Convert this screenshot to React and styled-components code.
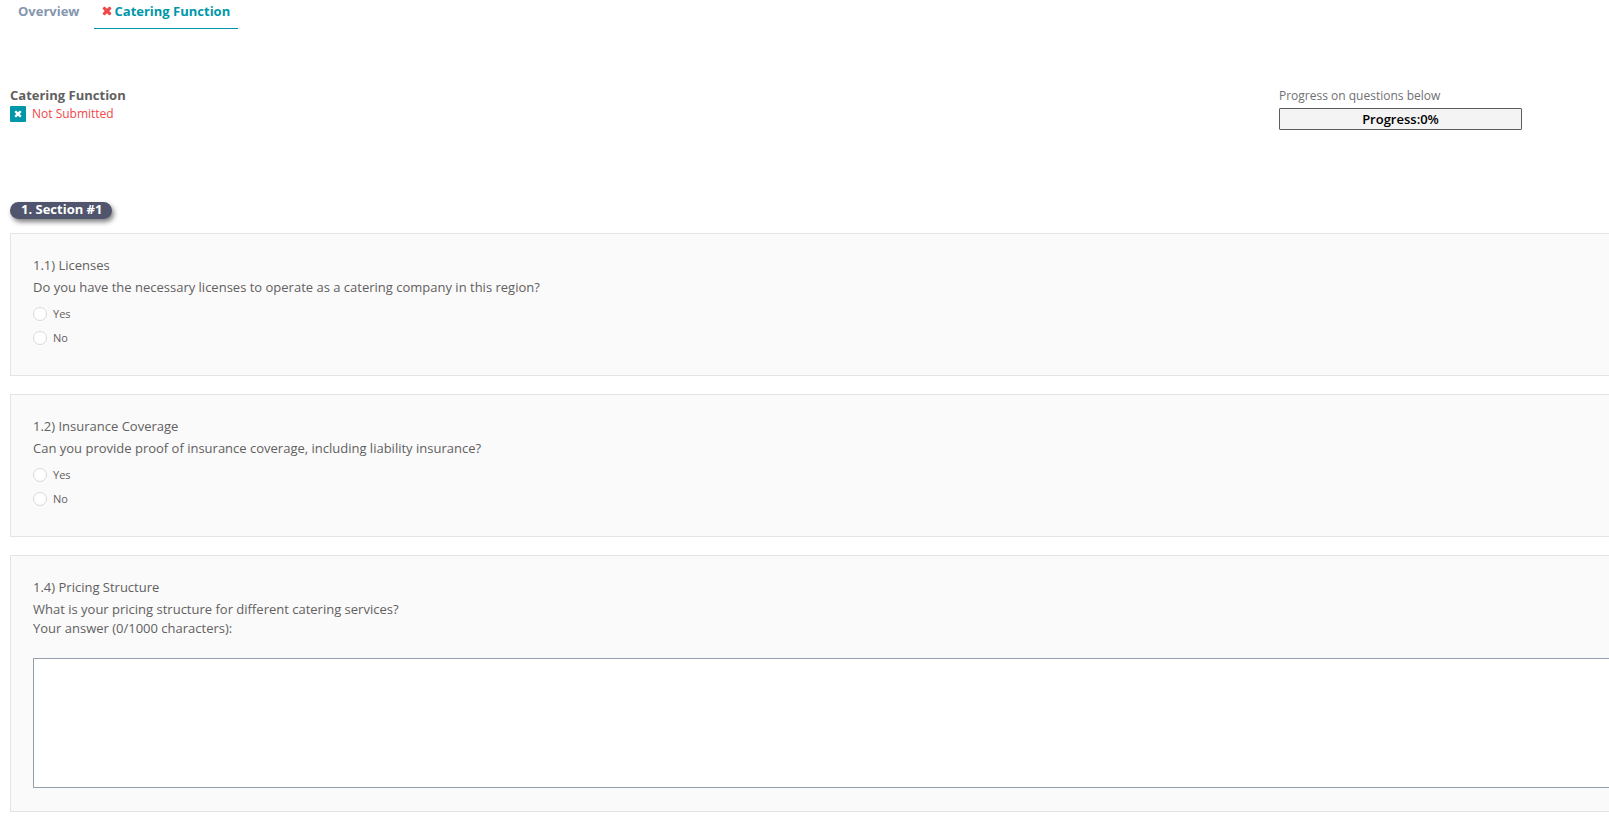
import React, { useState } from "react";
import styled, { createGlobalStyle } from "styled-components";

const GlobalStyle = createGlobalStyle`
  *, *::before, *::after { box-sizing: border-box; }
  body {
    margin: 0;
    background: #fff;
    color: #626060;
    font-family: "Open Sans", "Noto Sans", sans-serif;
    font-size: 13px;
    line-height: 20px;
    overflow-x: hidden;
  }
`;

const Page = styled.main`
  padding: 0 0 5px 10px;
`;

const Tabs = styled.nav`
  display: flex;
  gap: 6px;
`;

const Tab = styled.a`
  display: flex;
  align-items: center;
  gap: 3px;
  height: 29px;
  padding: 0 8px 6px;
  border-bottom: 1px solid ${(p) => (p.$active ? "#0097a9" : "transparent")};
  color: ${(p) => (p.$active ? "#0097a9" : "#8496ae")};
  font-weight: 700;
  text-decoration: none;
`;

const Header = styled.header`
  display: flex;
  justify-content: space-between;
  align-items: flex-start;
  margin-top: 57px;
  padding-right: 87px;
`;

const FunctionName = styled.h1`
  margin: 0 0 2px;
  font-size: 13px;
  line-height: 18px;
  font-weight: 700;
`;

const Status = styled.p`
  display: flex;
  align-items: center;
  gap: 6px;
  margin: 0;
  height: 16px;
  color: #f0474b;
  font-size: 12px;
`;

const StatusBadge = styled.span`
  display: flex;
  align-items: center;
  justify-content: center;
  width: 16px;
  height: 16px;
  border-radius: 1px;
  background: #0097a9;
  color: #fff;
`;

const ProgressPanel = styled.div`
  width: 243px;
`;

const ProgressLabel = styled.div`
  color: #6f7073;
  font-size: 12px;
`;

const ProgressBar = styled.div`
  height: 22px;
  margin-top: 2px;
  border: 1px solid #5d5b60;
  border-radius: 1px;
  background: #f4f4f4;
  color: #000;
  font-size: 13px;
  line-height: 20px;
  font-weight: 600;
  text-align: center;
`;

const SectionTitle = styled.h2`
  width: fit-content;
  height: 17px;
  margin: 72px 0 14px;
  padding: 0 10px 0 11px;
  border-radius: 9px;
  background: #50546c;
  box-shadow: 2px 3px 5px rgba(0, 0, 0, 0.5);
  color: #fff;
  font-size: 13px;
  line-height: 15px;
  font-weight: 700;
`;

const Questions = styled.div`
  display: grid;
  gap: 18px;
`;

const Card = styled.section`
  padding: 21px 0 ${(p) => (p.$compact ? 25 : 23)}px 22px;
  border: 1px solid #e3e4e4;
  border-right: 0;
  background: #fafafa;
`;

const CardTitle = styled.h3`
  margin: 0 0 2px;
  font-size: 13px;
  line-height: 20px;
  font-weight: 400;
`;

const Text = styled.p`
  margin: 0;
`;

const Options = styled.fieldset`
  margin: 0;
  padding: 0;
  border: 0;
`;

const Question = styled.legend`
  margin-bottom: 5px;
  padding: 0;
`;

const Option = styled.label`
  display: flex;
  align-items: center;
  gap: 6px;
  height: 24px;
  font-size: 11px;
`;

const Radio = styled.input`
  appearance: none;
  width: 14px;
  height: 14px;
  margin: 0;
  border: 1px solid #d9d9d9;
  border-radius: 50%;
  background: #fff;

  &:checked {
    border: 4px solid #0097a9;
  }
`;

const AnswerLabel = styled.label`
  display: block;
  line-height: 18px;
`;

const Answer = styled.textarea`
  display: block;
  width: 100%;
  height: 130px;
  margin-top: 21px;
  padding: 6px;
  border: 1px solid #929ea9;
  border-right: 0;
  border-radius: 1px 0 0 1px;
  background: #fff;
  color: inherit;
  font: inherit;
  resize: none;
`;

const Cross = ({ size, color }) => (
  <svg width={size} height={size} viewBox="0 0 10 10" aria-hidden="true">
    <path
      fill={color}
      d="M2.9 .8 5 2.7 7.1 .8Q7.5.5 7.9 .8L9.2 2.1Q9.5 2.5 9.2 2.9L7.3 5 9.2 7.1Q9.5 7.5 9.2 7.9L7.9 9.2Q7.5 9.5 7.1 9.2L5 7.3 2.9 9.2Q2.5 9.5 2.1 9.2L.8 7.9Q.5 7.5.8 7.1L2.7 5 .8 2.9Q.5 2.5.8 2.1L2.1 .8Q2.5.5 2.9.8Z"
    />
  </svg>
);

const YesNoQuestion = ({ name, title, question }) => (
  <Card $compact>
    <CardTitle>{title}</CardTitle>
    <Options>
      <Question>{question}</Question>
      {["Yes", "No"].map((value) => (
        <Option key={value}>
          <Radio type="radio" name={name} value={value} />
          {value}
        </Option>
      ))}
    </Options>
  </Card>
);

export default function App() {
  const [answer, setAnswer] = useState("");
  return (
    <>
      <GlobalStyle />
      <Page>
        <Tabs>
          <Tab href="#overview">Overview</Tab>
          <Tab href="#catering" $active aria-current="page">
            <Cross size={10} color="#f0474b" />
            Catering Function
          </Tab>
        </Tabs>
        <Header>
          <div>
            <FunctionName>Catering Function</FunctionName>
            <Status>
              <StatusBadge>
                <Cross size={8} color="#fff" />
              </StatusBadge>
              Not Submitted
            </Status>
          </div>
          <ProgressPanel>
            <ProgressLabel id="progress-label">Progress on questions below</ProgressLabel>
            <ProgressBar
              role="progressbar"
              aria-labelledby="progress-label"
              aria-valuenow={0}
              aria-valuemin={0}
              aria-valuemax={100}
            >
              Progress:0%
            </ProgressBar>
          </ProgressPanel>
        </Header>
        <SectionTitle>1. Section #1</SectionTitle>
        <Questions>
          <YesNoQuestion
            name="licenses"
            title="1.1) Licenses"
            question="Do you have the necessary licenses to operate as a catering company in this region?"
          />
          <YesNoQuestion
            name="insurance"
            title="1.2) Insurance Coverage"
            question="Can you provide proof of insurance coverage, including liability insurance?"
          />
          <Card>
            <CardTitle>1.4) Pricing Structure</CardTitle>
            <Text>What is your pricing structure for different catering services?</Text>
            <AnswerLabel htmlFor="pricing">
              Your answer ({answer.length}/1000 characters):
            </AnswerLabel>
            <Answer
              id="pricing"
              maxLength={1000}
              value={answer}
              onChange={(e) => setAnswer(e.target.value)}
            />
          </Card>
        </Questions>
      </Page>
    </>
  );
}
